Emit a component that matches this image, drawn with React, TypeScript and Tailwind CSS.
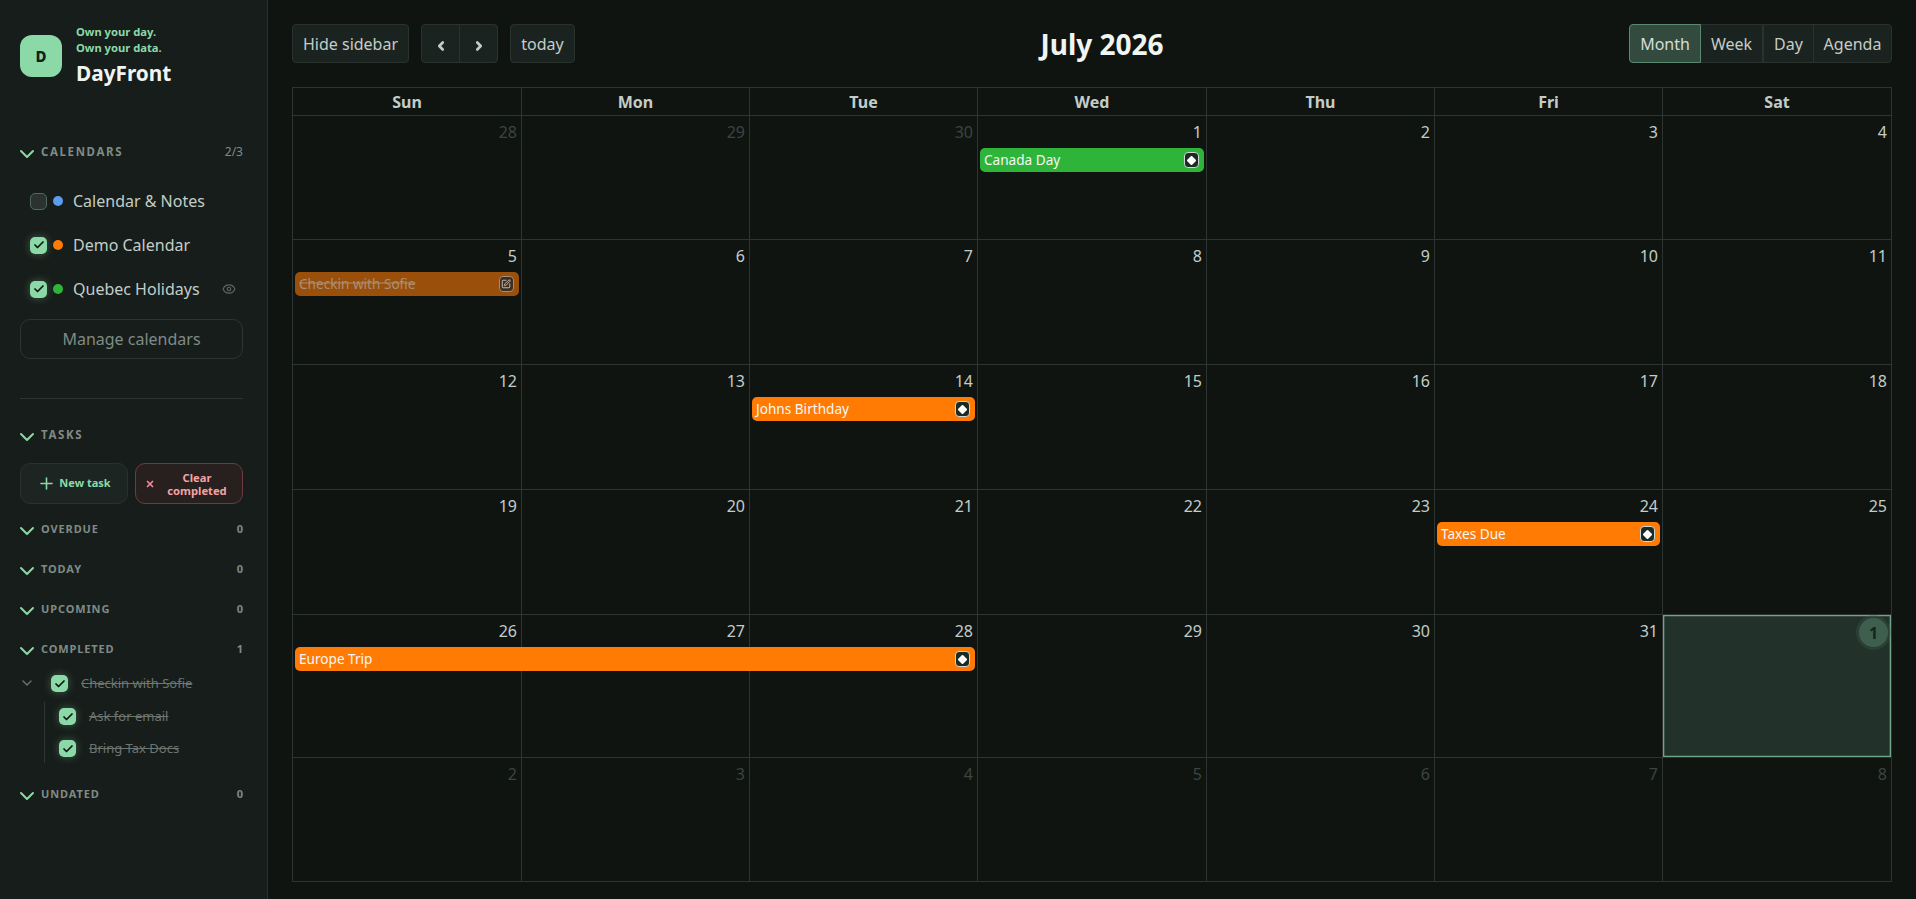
import { Check, ChevronDown, ChevronLeft, ChevronRight, Eye, Plus, SquarePen, X } from 'lucide-react';

const FONT = 'font-["Noto_Sans",sans-serif]';

const COL_START = ['col-start-1', 'col-start-2', 'col-start-3', 'col-start-4', 'col-start-5', 'col-start-6', 'col-start-7'];
const COL_SPAN: Record<number, string> = { 1: 'col-span-1', 3: 'col-span-3' };

type CalEvent = { col: number; span: number; title: string; color: string; done?: boolean };
type Week = { days: { n: number; muted?: boolean; today?: boolean }[]; height: string; events: CalEvent[] };

const mk = (start: number, end?: number) => {
  const out: number[] = [];
  for (let i = start; i <= (end ?? start + 6); i++) out.push(i);
  return out;
};

const WEEKS: Week[] = [
  {
    height: 'h-[124px]',
    days: [
      ...mk(28, 30).map((n) => ({ n, muted: true })),
      ...mk(1, 4).map((n) => ({ n })),
    ],
    events: [{ col: 3, span: 1, title: 'Canada Day', color: 'bg-[#2eb539]' }],
  },
  {
    height: 'h-[125px]',
    days: mk(5).map((n) => ({ n })),
    events: [{ col: 0, span: 1, title: 'Checkin with Sofie', color: 'bg-[#9a4f0a]', done: true }],
  },
  {
    height: 'h-[125px]',
    days: mk(12).map((n) => ({ n })),
    events: [{ col: 2, span: 1, title: 'Johns Birthday', color: 'bg-[#ff7b04]' }],
  },
  {
    height: 'h-[125px]',
    days: mk(19).map((n) => ({ n })),
    events: [{ col: 5, span: 1, title: 'Taxes Due', color: 'bg-[#ff7b04]' }],
  },
  {
    height: 'h-[143px]',
    days: [...mk(26, 31).map((n) => ({ n })), { n: 1, today: true }],
    events: [{ col: 0, span: 3, title: 'Europe Trip', color: 'bg-[#ff7b04]' }],
  },
  {
    height: 'h-[124px]',
    days: mk(2, 8).map((n) => ({ n, muted: true })),
    events: [],
  },
];

function SectionChevron() {
  return <ChevronDown className="my-[-4px] ml-[-5px] mr-[-4px] h-6 w-6 translate-y-[2px] text-[#8cd9a8]" strokeWidth={2} />;
}

function Checkbox() {
  return (
    <span className="flex h-[17px] w-[17px] shrink-0 items-center justify-center rounded-[5px] bg-[#8cd9a8] shadow-[0_0_8px_rgba(140,217,168,0.35)]">
      <Check className="h-3 w-3 text-[#0f1411]" strokeWidth={3.5} />
    </span>
  );
}

function SectionRow({ label, count, className }: { label: string; count: string; className?: string }) {
  return (
    <div className={`flex h-4 items-center ${className ?? ''}`}>
      <SectionChevron />
      <span className="ml-[6px] text-[11px] font-bold tracking-[0.08em] text-[#7f8b85]">{label}</span>
      <span className="ml-auto text-[11px] font-bold text-[#7f8b85]">{count}</span>
    </div>
  );
}

function CalendarRow({ label, dot, checked, eye }: { label: string; dot: string; checked?: boolean; eye?: boolean }) {
  return (
    <div className="flex h-11 items-center pl-[10px]">
      {checked ? (
        <Checkbox />
      ) : (
        <span className="h-[17px] w-[17px] shrink-0 rounded-[5px] border border-[#4f6a5c] bg-[#2a332f]" />
      )}
      <span className={`ml-[6px] h-[10px] w-[10px] rounded-full ${dot}`} />
      <span className="ml-[10px] text-[16px] text-[#c3cdc8]">{label}</span>
      {eye && <Eye className="ml-auto mr-[7px] h-[14px] w-[14px] text-[#5c6662]" />}
    </div>
  );
}

function TaskRow({ label, indent }: { label: string; indent?: boolean }) {
  return (
    <div className={`flex h-[17px] items-center ${indent ? 'pl-[39px]' : 'pl-[31px]'}`}>
      <Checkbox />
      <span className="ml-[13px] text-[13px] text-[#6c7570] line-through">{label}</span>
    </div>
  );
}

function Sidebar() {
  return (
    <aside className="flex h-[899px] w-[268px] shrink-0 flex-col border-r border-[#2a302d] bg-[#171d1a] pl-5 pr-6">
      <div className="flex items-start pt-[24px]">
        <div className="mt-[11px] flex h-[42px] w-[42px] items-center justify-center rounded-[12px] bg-[#8cd9a8] text-[15px] font-extrabold text-[#12201a]">
          D
        </div>
        <div className="ml-[14px]">
          <div className="text-[11.2px] font-bold leading-4 text-[#8cd9a8]">Own your day.</div>
          <div className="text-[11.2px] font-bold leading-4 text-[#8cd9a8]">Own your data.</div>
          <div className="mt-[3px] text-[20.8px] font-bold leading-7 text-[#f0f4f2]">DayFront</div>
        </div>
      </div>

      <div className="mt-[57px] flex h-4 items-center">
        <SectionChevron />
        <span className="ml-[6px] text-[11.5px] font-bold tracking-[0.14em] text-[#7f8b85]">CALENDARS</span>
        <span className="ml-auto text-[12px] text-[#7f8b85]">2/3</span>
      </div>

      <div className="mt-[19px]">
        <CalendarRow label="Calendar & Notes" dot="bg-[#5b9cf0]" />
        <CalendarRow label="Demo Calendar" dot="bg-[#ff7b04]" checked />
        <CalendarRow label="Quebec Holidays" dot="bg-[#2eb539]" checked eye />
      </div>

      <button className="mt-[8px] h-10 w-full rounded-[10px] border border-[#2d3431] text-[16px] text-[#7f8b85]">
        Manage calendars
      </button>

      <div className="mt-[39px] h-px bg-[#2d3431]" />

      <div className="mt-[28px] flex h-4 items-center">
        <SectionChevron />
        <span className="ml-[6px] text-[11.5px] font-bold tracking-[0.14em] text-[#7f8b85]">TASKS</span>
      </div>

      <div className="mt-[20px] flex h-[41px] gap-[7px]">
        <button className="flex h-full w-[108px] items-center justify-center rounded-[10px] border border-[#2a322e] bg-[#1c2522] text-[11px] font-bold text-[#8cd9a8]">
          <Plus className="mr-[3px] h-[19px] w-[19px]" />
          New task
        </button>
        <button className="flex h-full w-[108px] items-center rounded-[10px] border border-[#6e3b41] bg-[#281f1f] pl-[9px] text-[11.2px] font-bold leading-[13px] text-[#f3a3a3]">
          <X className="h-[10px] w-[10px] text-[#f58a9c]" strokeWidth={4} />
          <span className="ml-[11px] w-[62px] text-center">Clear completed</span>
        </button>
      </div>

      <SectionRow label="OVERDUE" count="0" className="mt-[17px]" />
      <SectionRow label="TODAY" count="0" className="mt-[24px]" />
      <SectionRow label="UPCOMING" count="0" className="mt-[24px]" />
      <SectionRow label="COMPLETED" count="1" className="mt-[24px]" />

      <div className="relative mt-[18px]">
        <ChevronDown className="absolute left-[-1px] top-0 h-4 w-4 text-[#6c7570]" />
        <TaskRow label="Checkin with Sofie" />
        <div className="ml-[24px] mt-[10px] border-l border-[#2d3431] py-[6px]">
          <div className="ml-[-25px] flex flex-col gap-[15px]">
            <TaskRow label="Ask for email" indent />
            <TaskRow label="Bring Tax Docs" indent />
          </div>
        </div>
      </div>

      <SectionRow label="UNDATED" count="0" className="mt-[23px]" />
    </aside>
  );
}

function EventBar({ ev }: { ev: CalEvent }) {
  return (
    <div
      className={`${COL_START[ev.col]} ${COL_SPAN[ev.span]} row-start-2 ml-[3px] mr-[2px] flex h-6 items-center rounded-[5px] pl-1 pr-[5px] ${ev.color}`}
    >
      <span className={`flex-1 -translate-y-[0.5px] text-[13.6px] ${ev.done ? 'text-[#a88f78] line-through' : 'text-[#f7f7f7]'}`}>{ev.title}</span>
      <span className={`flex h-[15.5px] w-[15.5px] items-center justify-center rounded-[4px] border ${ev.done ? 'border-[#a38d7b] bg-[#3f2e20]' : 'border-[#d0d6d3] bg-[#1c2a24]'}`}>
        {ev.done ? (
          <SquarePen className="h-[10px] w-[10px] text-[#d8d2cc]" strokeWidth={2} />
        ) : (
          <span className="h-[7px] w-[7px] rotate-45 rounded-[1px] bg-white" />
        )}
      </span>
    </div>
  );
}

function MonthGrid() {
  return (
    <div className="border-r border-b border-[#2e3431]">
      <div className="grid h-7 grid-cols-[229px_228px_228px_229px_228px_228px_1fr]">
        {['Sun', 'Mon', 'Tue', 'Wed', 'Thu', 'Fri', 'Sat'].map((d) => (
          <div key={d} className="flex items-center justify-center border-t border-l border-[#2e3431] text-[16px] font-bold text-[#c3cdc8]">
            {d}
          </div>
        ))}
      </div>
      {WEEKS.map((w, i) => (
        <div key={i} className={`grid grid-cols-[229px_228px_228px_229px_228px_228px_1fr] grid-rows-[33px_24px_1fr] ${w.height}`}>
          {w.days.map((d, j) => (
            <div
              key={j}
              className={`${COL_START[j]} row-span-3 row-start-1 flex justify-end border-t border-l border-[#2e3431] ${d.today ? 'bg-[#22322a] shadow-[inset_0_0_0_1.3px_#6fa586]' : ''}`}
            >
              {d.today ? (
                <span className="mr-[3px] mt-[3px] flex h-[29px] w-[29px] items-center justify-center rounded-full bg-[#3f5f4e] text-[16px] font-bold text-[#16241d] shadow-[0_0_0_3px_rgba(63,95,78,0.3)]">
                  {d.n}
                </span>
              ) : (
                <span className={`pr-1 pt-[2px] text-[16px] leading-[28px] ${d.muted ? 'text-[#3d4440]' : 'text-[#c3cdc8]'}`}>{d.n}</span>
              )}
            </div>
          ))}
          {w.events.map((ev) => (
            <EventBar key={ev.title} ev={ev} />
          ))}
        </div>
      ))}
    </div>
  );
}

const BTN = 'h-[39px] border border-[#2a322e] bg-[#1b2320] text-[16px] text-[#c3cdc8]';

function Toolbar() {
  return (
    <div className="flex h-[39px] items-center justify-between">
      <div className="flex gap-3">
        <button className={`${BTN} w-[117px] rounded-[4px]`}>Hide sidebar</button>
        <div className="flex">
          <button className={`${BTN} flex w-[39px] items-center justify-center rounded-l-[4px]`}>
            <ChevronLeft className="h-[14px] w-[14px] translate-y-[2px]" strokeWidth={4.5} />
          </button>
          <button className={`${BTN} ml-[-1px] flex w-[39px] items-center justify-center rounded-r-[4px]`}>
            <ChevronRight className="h-[14px] w-[14px] translate-y-[2px]" strokeWidth={4.5} />
          </button>
        </div>
        <button className={`${BTN} w-[65px] rounded-[4px]`}>today</button>
      </div>
      <h2 className="text-[28px] font-bold text-[#f0f4f2]">July 2026</h2>
      <div className="flex">
        <button className="h-[39px] w-[72px] rounded-l-[4px] border border-[#5a8a70] bg-[#334a3e] text-[16px] text-[#d5ddd9]">Month</button>
        <button className={`${BTN} w-[62px] border-l-0`}>Week</button>
        <button className={`${BTN} w-[51px]`}>Day</button>
        <button className={`${BTN} ml-[-1px] w-[79px] rounded-r-[4px]`}>Agenda</button>
      </div>
    </div>
  );
}

export default function App() {
  return (
    <div className={`flex h-[899px] w-full overflow-hidden bg-[#0f1411] ${FONT}`}>
      <Sidebar />
      <main className="min-w-0 flex-1 px-6 pt-6">
        <Toolbar />
        <div className="mt-6">
          <MonthGrid />
        </div>
      </main>
    </div>
  );
}
